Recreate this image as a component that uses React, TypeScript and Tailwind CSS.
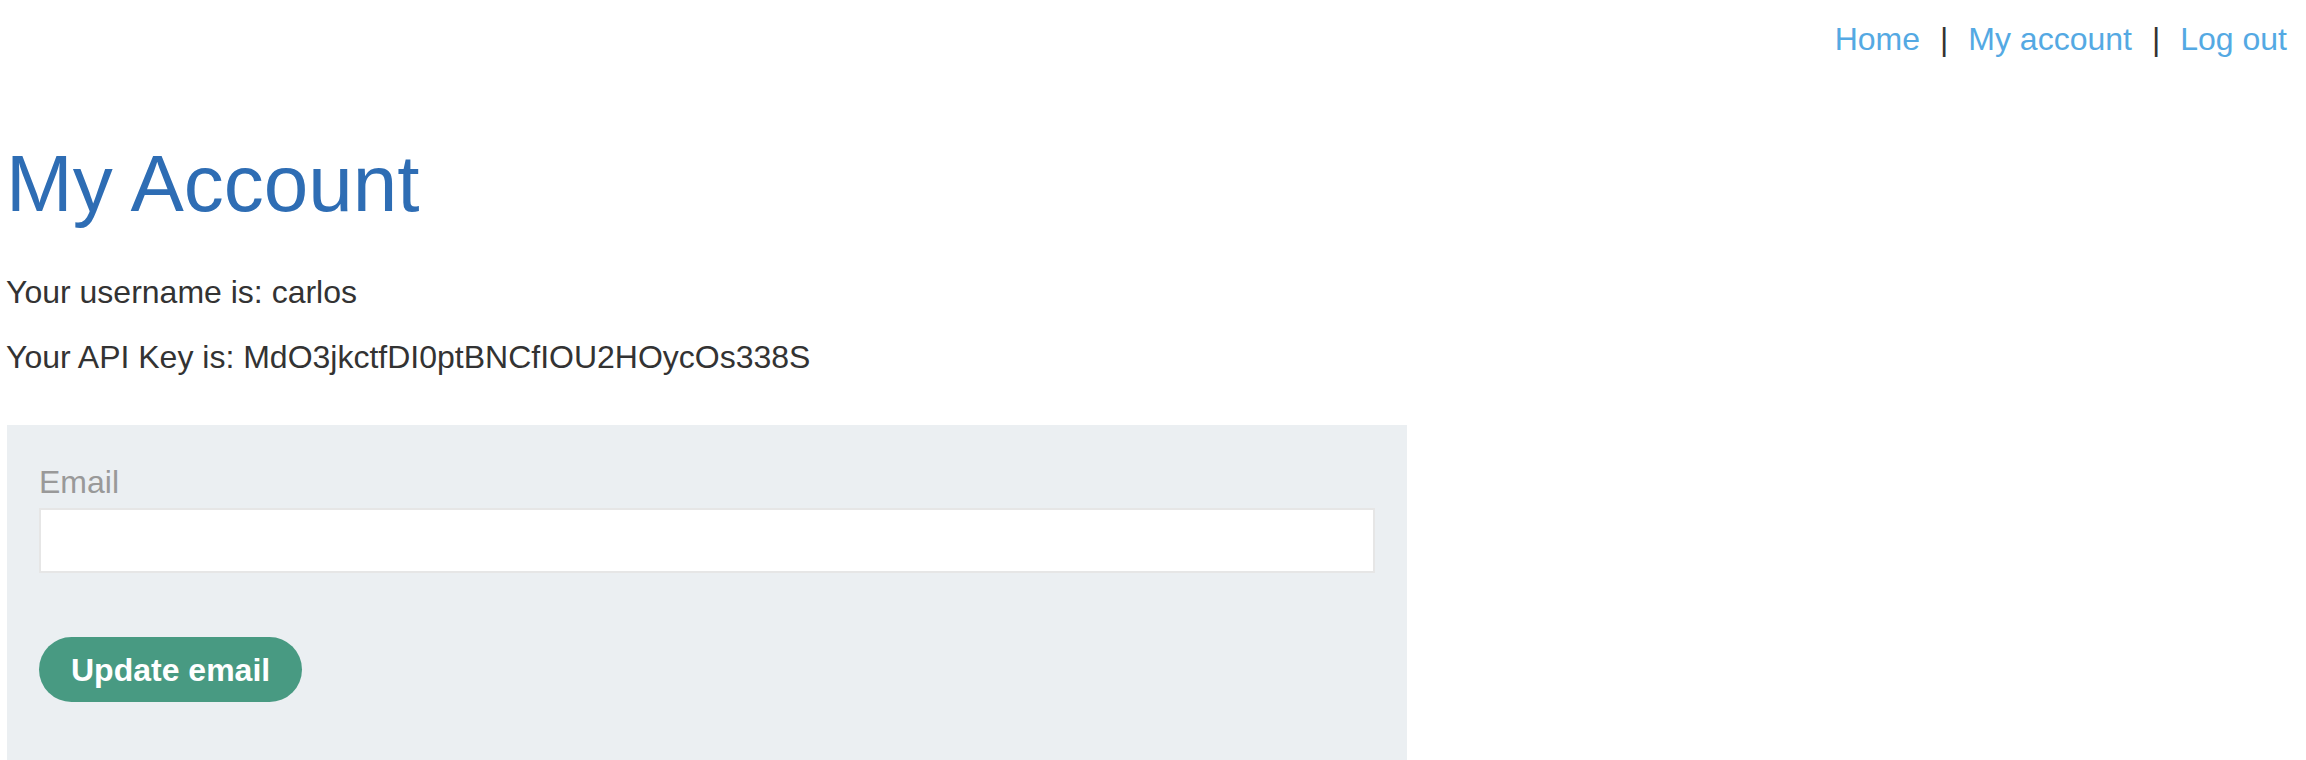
export default function App() {
  return (
    <div className="min-h-screen bg-white font-['Liberation_Sans',Arial,sans-serif] text-[#333333]">
      <header className="flex justify-end pr-[19px] pt-[23px]">
        <nav className="flex items-center gap-[20px] text-[32px] leading-none">
          <a href="#" className="text-[#54a9e3]">Home</a>
          <span>|</span>
          <a href="#" className="text-[#54a9e3]">My account</a>
          <span>|</span>
          <a href="#" className="text-[#54a9e3]">Log out</a>
        </nav>
      </header>

      <main className="px-[6px]">
        <h1 className="mt-[89px] text-[80px] leading-none text-[#2e6db4]">My Account</h1>
        <p className="mt-[52px] text-[32px] leading-none">Your username is: carlos</p>
        <p className="mt-[33px] text-[32px] leading-none">Your API Key is: MdO3jkctfDI0ptBNCfIOU2HOycOs338S</p>

        <form className="ml-px mt-[52px] w-[1400px] bg-[#ebeff2] pl-[32px] pr-[32px] pt-[41px] pb-[80px]">
          <label className="block text-[32px] leading-none text-[#999999]">Email</label>
          <input
            type="email"
            name="email"
            className="mt-[10px] block h-[65px] w-[1336px] border-2 border-[#e6e6e6] bg-white px-3 text-[28px] outline-none"
          />
          <button
            type="button"
            className="mt-[64px] h-[65px] rounded-full bg-[#489a82] px-[32px] text-[32px] font-bold leading-none text-white"
          >
            Update email
          </button>
        </form>
      </main>
    </div>
  );
}
